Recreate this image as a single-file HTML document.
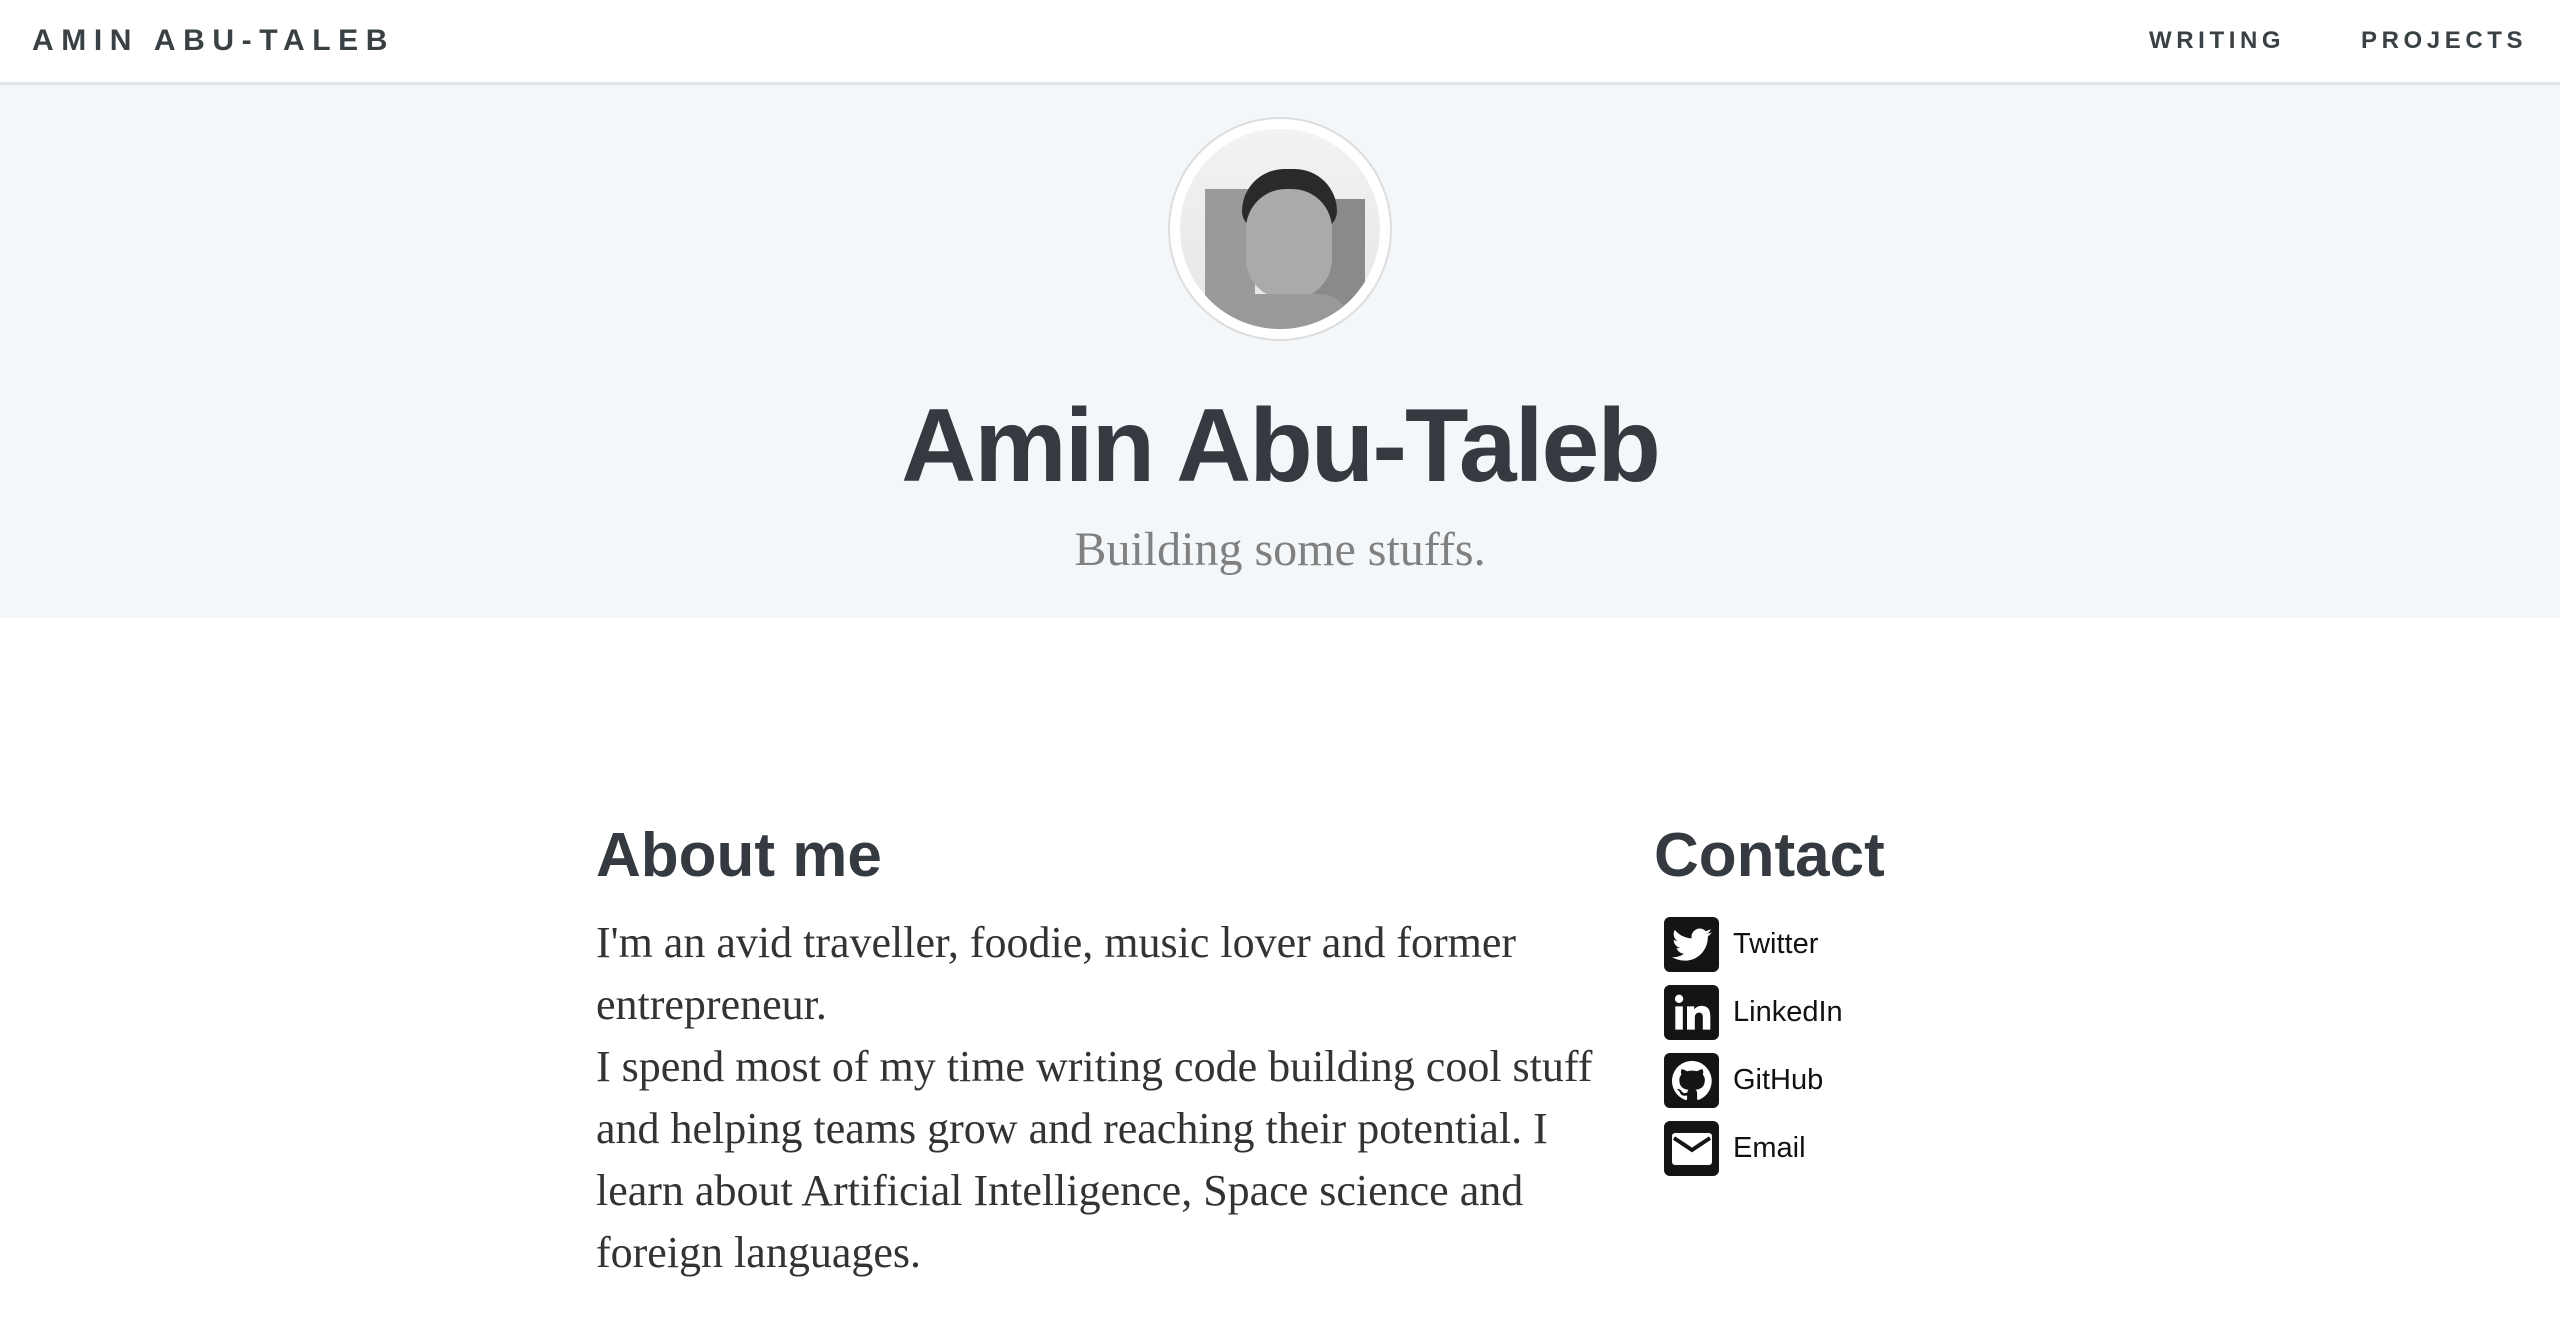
<!DOCTYPE html>
<html><head><meta charset="utf-8"><style>
*{margin:0;padding:0;box-sizing:border-box}
body{width:2560px;height:1330px;overflow:hidden;background:#fff;font-family:"Liberation Sans",sans-serif;color:#343a3f}
.nav{height:85px;border-bottom:3px solid #e2e4e6;position:relative;background:#fff}
.brand{position:absolute;left:32px;top:24px;font-weight:bold;font-size:30px;letter-spacing:7.6px;color:#3a4145}
.nl{position:absolute;top:27px;font-weight:bold;font-size:24px;letter-spacing:4.6px;color:#3a4145}
.hero{background:#f4f7fa;height:533px;position:relative}
.av{position:absolute;left:1168px;top:32px;width:224px;height:224px;border-radius:50%;background:#fff;border:2px solid #ddd;overflow:hidden}
.av .in{position:absolute;left:10px;top:10px;width:200px;height:200px;border-radius:50%;background:linear-gradient(#f2f2f2,#e6e6e6);overflow:hidden}
h1{position:absolute;left:0;right:0;top:302px;text-align:center;font-size:104px;font-weight:bold;letter-spacing:-2px;color:#343a3f}
.sub{position:absolute;left:0;right:0;top:437px;text-align:center;font-family:"Liberation Serif",serif;font-size:48px;color:#808080}
h2{position:absolute;top:820px;font-size:62px;font-weight:bold;color:#343a3f}
.p{position:absolute;left:596px;top:912px;width:1010px;font-family:"Liberation Serif",serif;font-size:44px;line-height:62px;color:#333}
.c{position:absolute;left:1664px;height:55px;display:flex;align-items:center}
.ic{width:55px;height:55px;background:#141414;border-radius:6px;display:flex;align-items:center;justify-content:center}
.c span{margin-left:14px;font-size:29px;color:#111}
</style></head><body>
<div class="nav"><div class="brand">AMIN ABU-TALEB</div>
<div class="nl" style="left:2149px">WRITING</div><div class="nl" style="left:2361px">PROJECTS</div></div>
<div class="hero">
<div class="av"><div class="in">
<div style="position:absolute;left:25px;top:60px;width:50px;height:140px;background:#9a9a9a"></div>
<div style="position:absolute;left:125px;top:70px;width:60px;height:130px;background:#8a8a8a"></div>
<div style="position:absolute;left:62px;top:40px;width:95px;height:60px;border-radius:48px 48px 20px 20px;background:#2a2a2a"></div>
<div style="position:absolute;left:66px;top:60px;width:86px;height:110px;border-radius:40px;background:#aaa"></div>
<div style="position:absolute;left:40px;top:165px;width:130px;height:60px;border-radius:40px;background:#999"></div>
</div></div>
<h1>Amin Abu-Taleb</h1>
<div class="sub">Building some stuffs.</div>
</div>
<h2 style="left:596px">About me</h2>
<h2 style="left:1654px">Contact</h2>
<div class="p">I'm an avid traveller, foodie, music lover and former entrepreneur.<br>I spend most of my time writing code building cool stuff and helping teams grow and reaching their potential. I learn about Artificial Intelligence, Space science and foreign languages.</div>
<div class="c" style="top:917px"><div class="ic"><svg width="40" height="34" viewBox="0 0 24 20"><path fill="#fff" d="M24 2.4a10 10 0 0 1-2.8.8A5 5 0 0 0 23.3.5a10 10 0 0 1-3.1 1.2A4.9 4.9 0 0 0 11.8 6 14 14 0 0 1 1.7.9a4.9 4.9 0 0 0 1.5 6.6A4.9 4.9 0 0 1 1 6.9a4.9 4.9 0 0 0 3.9 4.8 4.9 4.9 0 0 1-2.2.1 4.9 4.9 0 0 0 4.6 3.4A9.9 9.9 0 0 1 0 17.2 14 14 0 0 0 7.5 19.4c9.1 0 14-7.5 14-14v-.6A10 10 0 0 0 24 2.4z"/></svg></div><span>Twitter</span></div>
<div class="c" style="top:985px"><div class="ic"><svg width="40" height="40" viewBox="0 0 24 24"><path fill="#fff" d="M2 8h4.5v14H2zM4.25 1a2.5 2.5 0 1 1 0 5 2.5 2.5 0 0 1 0-5zM9 8h4.3v2c.6-1.1 2.1-2.3 4.3-2.3 4.6 0 5.4 3 5.4 6.9V22h-4.5v-6.6c0-1.6 0-3.6-2.2-3.6s-2.6 1.7-2.6 3.5V22H9z"/></svg></div><span>LinkedIn</span></div>
<div class="c" style="top:1053px"><div class="ic"><svg width="44" height="44" viewBox="0 0 24 24"><path fill="#fff" d="M12 1a11 11 0 0 0-3.5 21.4c.6.1.8-.2.8-.5v-2c-3.1.7-3.7-1.3-3.7-1.3-.5-1.3-1.2-1.6-1.2-1.6-1-.7.1-.7.1-.7 1.1.1 1.7 1.1 1.7 1.1 1 1.7 2.6 1.2 3.2.9.1-.7.4-1.2.7-1.5-2.4-.3-5-1.2-5-5.4 0-1.2.4-2.2 1.1-2.9-.1-.3-.5-1.4.1-2.9 0 0 .9-.3 3 1.1a10.4 10.4 0 0 1 5.5 0c2.1-1.4 3-1.1 3-1.1.6 1.5.2 2.6.1 2.9.7.8 1.1 1.7 1.1 2.9 0 4.2-2.6 5.1-5 5.4.4.3.8 1 .8 2v3c0 .3.2.6.8.5A11 11 0 0 0 12 1z"/></svg></div><span>GitHub</span></div>
<div class="c" style="top:1121px"><div class="ic"><svg width="40" height="32" viewBox="0 0 40 32"><rect x="0" y="0" width="40" height="32" rx="3" fill="#fff"/><path d="M2 5l18 12L38 5" fill="none" stroke="#141414" stroke-width="4"/></svg></div><span>Email</span></div>
</body></html>
